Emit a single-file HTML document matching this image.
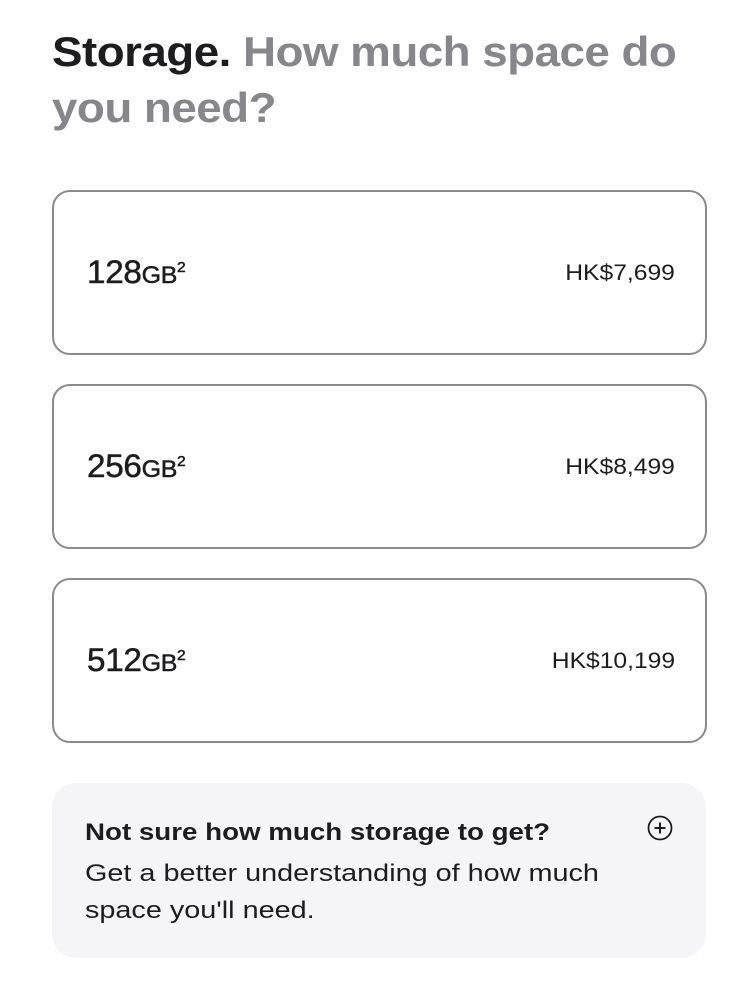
<!DOCTYPE html>
<html><head><meta charset="utf-8"><style>
body{margin:0;background:#fff;font-family:"Liberation Sans",Arial,sans-serif;color:#1d1d1f;width:746px;height:1008px;overflow:hidden;position:relative}
h1{position:absolute;left:52px;top:24px;margin:0;font-size:42px;line-height:56px;font-weight:700;letter-spacing:-0.5px;white-space:nowrap;transform:scaleX(1.09);transform-origin:0 0}
h1 span{color:#86868b}
.card{position:absolute;left:52px;width:651px;height:161px;border:2px solid #8a8a8a;border-radius:18px;box-sizing:content-box}
.cap{position:absolute;left:33px;top:62px;font-size:32px;font-weight:400;-webkit-text-stroke:0.5px #1d1d1f;letter-spacing:-0.3px;color:#1d1d1f;transform:scaleX(1.04);transform-origin:0 0}
.cap small{font-size:24px}
.cap sup{font-size:15px;vertical-align:11px}
.price{position:absolute;right:30px;top:68px;font-size:22px;transform:scaleX(1.12);transform-origin:100% 0}
.info{position:absolute;left:52px;top:783px;width:654px;height:175px;background:#f5f5f7;border-radius:24px}
.info b{position:absolute;left:33px;top:36px;font-size:24px;white-space:nowrap;transform:scaleX(1.155);transform-origin:0 0}
.info p{position:absolute;left:33px;top:72px;margin:0;font-size:24px;line-height:37px;white-space:nowrap;transform:scaleX(1.2);transform-origin:0 0}
.info svg{position:absolute;left:595px;top:32px}
</style></head><body>
<h1>Storage. <span>How much space do<br>you need?</span></h1>
<div class="card" style="top:190px"><div class="cap">128<small>GB</small><sup>2</sup></div><div class="price">HK$7,699</div></div>
<div class="card" style="top:384px"><div class="cap">256<small>GB</small><sup>2</sup></div><div class="price">HK$8,499</div></div>
<div class="card" style="top:578px"><div class="cap">512<small>GB</small><sup>2</sup></div><div class="price">HK$10,199</div></div>
<div class="info"><b>Not sure how much storage to get?</b><p>Get a better understanding of how much<br>space you'll need.</p>
<svg width="26" height="26" viewBox="0 0 26 26"><circle cx="13" cy="13" r="11.5" fill="none" stroke="#1d1d1f" stroke-width="1.8"/><path d="M13 7.5v11M7.5 13h11" stroke="#1d1d1f" stroke-width="2"/></svg></div>
</body></html>
